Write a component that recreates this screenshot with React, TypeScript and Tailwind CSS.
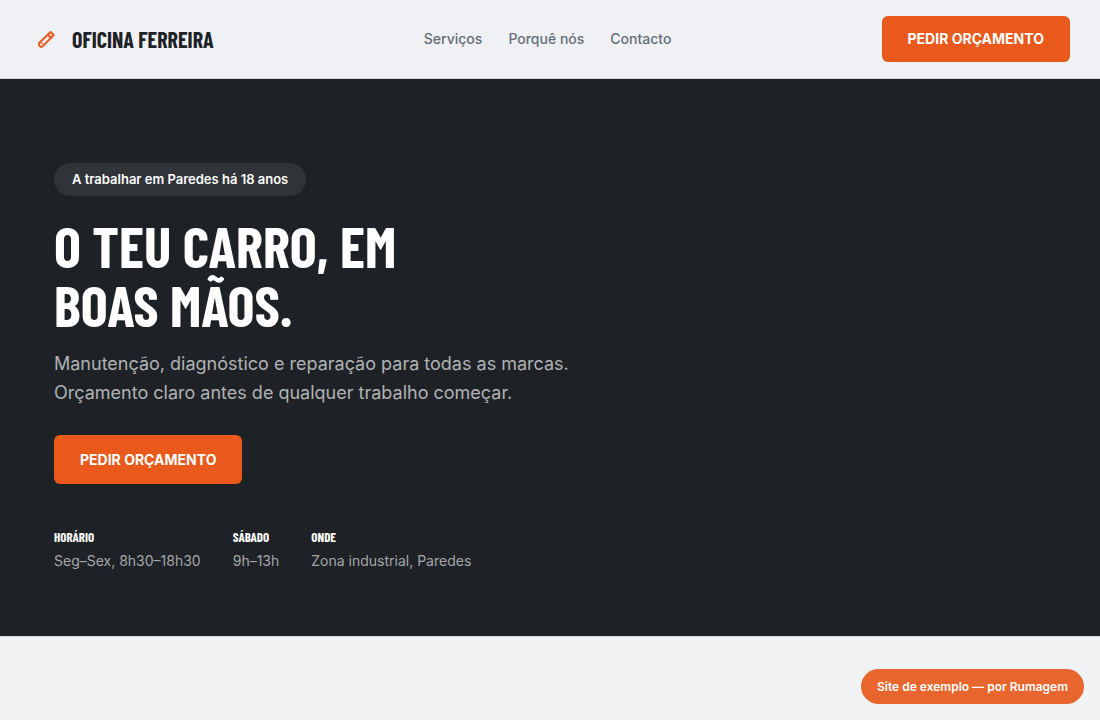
import React from 'react';

const navLinks = [
  { label: 'Serviços', href: '#servicos' },
  { label: 'Porquê nós', href: '#porque' },
  { label: 'Contacto', href: '#contacto' },
];

const facts = [
  { title: 'Horário', value: 'Seg–Sex, 8h30–18h30' },
  { title: 'Sábado', value: '9h–13h' },
  { title: 'Onde', value: 'Zona industrial, Paredes' },
];

const ToolIcon: React.FC = () => (
  <svg
    viewBox="0 0 18 18"
    className="w-[18px] h-[18px]"
    fill="none"
    stroke="currentColor"
    strokeWidth="2"
    strokeLinecap="round"
    strokeLinejoin="round"
    aria-hidden="true"
  >
    <path d="M13.6 2 16.6 5 6.2 15.9a2.5 2.5 0 0 1-3.6-3.5Z" />
    <path d="M11 4.8 14 7.8" />
    <path d="M4.8 13.6h.01" />
  </svg>
);

const App: React.FC = () => {
  return (
    <div className="min-h-screen bg-[#f0f2f4] font-['Inter',sans-serif] text-[#1e2226]">
      {/* Header */}
      <header className="flex items-center justify-between px-[30px] py-4 bg-[#f0f1f5] border-b border-[#d3d5d8]">
        <a href="#topo" className="flex items-center gap-[10px]">
          <span className="flex items-center justify-center w-8 h-8 text-[#e8591b]">
            <ToolIcon />
          </span>
          <span className="font-['Barlow_Condensed','Liberation_Sans_Narrow',sans-serif] text-[22px] leading-8 font-bold uppercase">
            Oficina Ferreira
          </span>
        </a>
        <nav className="flex items-center gap-[26px] text-sm leading-[22px] font-medium text-[#656d78]">
          {navLinks.map((link) => (
            <a key={link.href} href={link.href}>
              {link.label}
            </a>
          ))}
        </nav>
        <button
          type="button"
          className="px-[26px] py-3 rounded-md bg-[#e8591b] text-sm leading-[22px] font-bold uppercase text-white"
        >
          Pedir orçamento
        </button>
      </header>

      {/* Hero */}
      <main id="topo" className="bg-[#1e2226] px-[54px] pt-[84px] pb-16">
        <p className="w-fit px-[18px] py-[6px] rounded-full bg-[#303338] text-[13px] leading-[21px] font-semibold text-white">
          A trabalhar em Paredes há 18 anos
        </p>
        <h1 className="mt-5 max-w-[560px] font-['Barlow_Condensed','Liberation_Sans_Narrow',sans-serif] text-[57px] leading-[59px] font-bold uppercase text-white">
          O teu carro, em
          <br />
          boas mãos.
        </h1>
        <p className="mt-[15px] max-w-[540px] text-lg leading-[29px] text-[#b0b2b4]">
          Manutenção, diagnóstico e reparação para todas as marcas. Orçamento claro antes de qualquer trabalho começar.
        </p>
        <button
          type="button"
          className="mt-7 h-[49px] px-[26px] rounded-md bg-[#e8591b] text-sm leading-[22px] font-bold uppercase text-white"
        >
          Pedir orçamento
        </button>
        <dl className="mt-[43px] flex flex-wrap gap-8">
          {facts.map((fact) => (
            <div key={fact.title}>
              <dt className="font-['Barlow_Condensed','Liberation_Sans_Narrow',sans-serif] text-[13px] leading-[20px] font-bold uppercase text-white">
                {fact.title}
              </dt>
              <dd className="mt-[3px] text-sm leading-[22px] text-[#a5a7a9]">{fact.value}</dd>
            </div>
          ))}
        </dl>
      </main>

      <section id="servicos" className="border-t border-[#d3d5d8]" />

      <a
        href="#contacto"
        className="fixed right-4 bottom-4 px-4 py-2 rounded-full bg-[#e8662d] text-xs leading-[19px] font-semibold text-white"
      >
        Site de exemplo — por Rumagem
      </a>
    </div>
  );
};

export default App;
